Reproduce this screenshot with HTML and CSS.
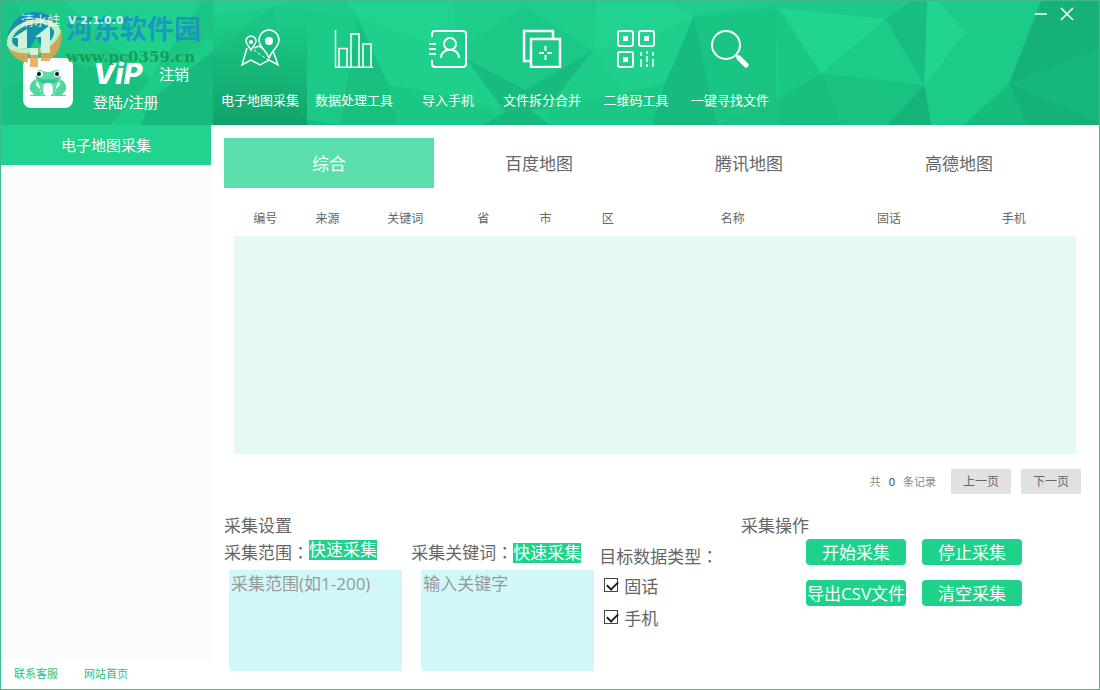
FILE: index.html
```html
<!DOCTYPE html>
<html lang="zh-CN">
<head>
<meta charset="utf-8">
<title>清水蛙 V 2.1.0.0</title>
<link rel="stylesheet" href="styles.css">
</head>
<body>
<div class="window">
  <header class="header">
    <svg class="header-art" viewBox="0 0 1100 125" preserveAspectRatio="none" aria-hidden="true">
      <rect width="1100" height="125" fill="#1ccb87"/>
      <path d="M0 0H62L150 78L90 125H0Z" fill="#1cc986"/>
      <path d="M0 0H15L55 125H0Z" fill="#1cc384"/>
      <path d="M62 0H202L150 78Z" fill="#1fd18d"/>
      <path d="M0 90L60 60L150 78L110 125H0Z" fill="#19c07f"/>
      <path d="M213 50L150 100L140 125H213Z" fill="#17b97c"/>
      <path d="M202 0L150 78L213 32V0Z" fill="#1bc584"/>
      <path d="M213 0H300L272 6L213 16Z" fill="#1fd18d"/>
      <path d="M272 6L213 50V125H345L290 90Z" fill="#1bc684"/>
      <path d="M272 6L357 17L345 125H300Z" fill="#1bca87"/>
      <path d="M300 118L336 125H300Z" fill="#18bd7e"/>
      <path d="M347 0H455V48L430 44L357 17Z" fill="#20d38f"/>
      <path d="M357 17L388 84L398 125H340Z" fill="#19c07f"/>
      <path d="M357 17L430 44L470 60L502 108L388 84Z" fill="#1ed08b"/>
      <path d="M388 84L440 94L502 115L478 125H398Z" fill="#1bc785"/>
      <path d="M455 0H596V50H455Z" fill="#1dcd89"/>
      <path d="M524 5L592 50L525 90L462 48Z" fill="#1bc886"/>
      <path d="M466 58L525 90L592 51L548 108L505 112Z" fill="#18bb7e"/>
      <path d="M505 112L525 106L550 125H483Z" fill="#17b87c"/>
      <path d="M548 108L592 51L660 84L625 94Z" fill="#1dcc89"/>
      <path d="M596 0H672L694 16L650 38L594 50Z" fill="#20d38f"/>
      <path d="M594 50L650 38L694 16L665 84L625 94Z" fill="#1ed08b"/>
      <path d="M548 108L665 84L652 125H550Z" fill="#1bc785"/>
      <path d="M672 0H780L694 16Z" fill="#1dcd89"/>
      <path d="M694 16L665 84L652 125H718Z" fill="#18bb7e"/>
      <path d="M694 16L776 6V120H718Z" fill="#1ac583"/>
      <path d="M776 6L822 73L780 98Z" fill="#1bc785"/>
      <path d="M694 16L780 0H912L886 18L780 7Z" fill="#1cc987"/>
      <path d="M780 7L886 18L822 73Z" fill="#20d590"/>
      <path d="M822 73L925 85L888 125H716L780 98Z" fill="#19c280"/>
      <path d="M822 73L780 98V125H842Z" fill="#18be7e"/>
      <path d="M886 18L912 0H928L925 85Z" fill="#18be80"/>
      <path d="M928 0H940L966 32L925 85Z" fill="#20d590"/>
      <path d="M925 85L888 125H932Z" fill="#16b277"/>
      <path d="M1010 83L965 125H1027Z" fill="#17bc7c"/>
      <path d="M1042 0H1100V125H1027L1010 83Z" fill="#15b176"/>
      <path d="M1010 83L1100 48V122Z" fill="#16b77a"/>
    </svg>

    <div class="brand">
      <h1 class="app-title"><span class="app-name">清水蛙</span><span>V 2.1.0.0</span></h1>
      <div class="account">
        <svg class="app-icon" viewBox="0 0 50 50" aria-hidden="true">
          <rect width="50" height="50" rx="8" fill="#fff"/>
          <path d="M14 21C9 22 6 27 7 32L11 37H7V38H19L17 31L13 27ZM36 21C41 22 44 27 43 32L39 37H43V38H31L33 31L37 27Z" fill="#4fd8a0"/>
          <path d="M14 16Q14 11 18 12Q21 14 25 14Q29 14 32 12Q37 11 37 16Q39 22 34 26L31 38H19L16 26Q11 22 14 16Z" fill="#5ddba6"/>
          <path d="M14 20Q25 23 36 20Q34 26 25 26Q16 26 14 20Z" fill="#38c88f"/>
          <path d="M21 26Q25 24 29 26Q32 38 25 38Q18 38 21 26Z" fill="#fff"/>
          <circle cx="17" cy="16" r="3" fill="#fff"/><circle cx="34" cy="16" r="3" fill="#fff"/>
          <circle cx="16" cy="16" r="2" fill="#111"/><circle cx="34" cy="16" r="2" fill="#111"/>
        </svg>
        <div class="account-info">
          <div class="account-row"><span class="vip">ViP</span><a class="account-link" href="#">注销</a></div>
          <a class="account-link" href="#">登陆/注册</a>
        </div>
      </div>
      <div class="watermark">
        <svg class="watermark-logo" viewBox="0 0 56 56" aria-hidden="true">
          <path d="M2 24C6 8 18 1 29 1C41 1 51 8 53 18C43 9 18 9 2 24Z" fill="#1b7fc0"/>
          <path d="M6 30C9 17 24 11 36 11Q44 11 48 16V32H32V24L24 37H12Q6 35 6 30Z" fill="#0d8db0"/>
          <path d="M1 34C8 44 34 46 55 20C58 36 48 46 45 48H38V42L22 44V52C12 50 4 44 1 34Z" fill="#eda24e"/>
          <path d="M1 34C0 19 15 9 33 8C46 8 53 13 55 20C52 30 44 37 34 40L34 36C43 33 49 26 48 20C45 13 35 11 26 13C14 15 6 23 6 30C7 36 15 38 24 37V42C12 43 3 40 1 34Z" fill="#dff3d3"/>
          <path d="M21 18V37H12V27H7ZM44 14V50H35V26H29ZM24 37H32V56H24Z" fill="#f0faee"/>
          <path d="M24 44H32V56H24ZM35 42H44V50H35Z" fill="#eda24e"/>
        </svg>
        <div class="watermark-text">
          <span class="watermark-name">河东软件园</span>
          <span class="watermark-url">www.pc0359.cn</span>
        </div>
      </div>
    </div>

    <nav class="toolbar">
      <button class="tool tool-active" type="button">
        <svg class="tool-icon" viewBox="0 0 40 40">
          <path d="M7 20L2 37L11 32L20 37L29 32L38 37L33 23M14 20L19 18L23 21"/>
          <path d="M11 22C9 18 6 16 6 13A5 5 0 0 1 16 13C16 16 13 18 11 22ZM29 30C26 22 19 19 19 12A10 10 0 0 1 39 12C39 19 32 22 29 30Z"/>
          <circle class="solid" cx="29" cy="13" r="4"/><circle class="solid" cx="11" cy="14" r="2"/>
          <path d="M14 22L28 32" stroke-dasharray="3 2" stroke-width="1"/>
        </svg>
        <span>电子地图采集</span>
      </button>
      <button class="tool" type="button">
        <svg class="tool-icon" viewBox="0 0 40 40"><path d="M1.500 2V39.200H39M5 39V20.500H13V39M17 39V6H25V39M29 39V16H37V39"/></svg>
        <span>数据处理工具</span>
      </button>
      <button class="tool" type="button">
        <svg class="tool-icon" viewBox="0 0 40 40"><path stroke-width="2" d="M4 9V6Q4 3 7 3H35Q38 3 38 6V36Q38 39 35 39H7Q4 39 4 36V32"/><path stroke-width="2" d="M1 16H8M1 21H8M1 26H8M13 30C13 19 31 19 31 30"/><circle cx="22" cy="16" r="6" stroke-width="2"/></svg>
        <span>导入手机</span>
      </button>
      <button class="tool" type="button">
        <svg class="tool-icon" viewBox="0 0 40 40"><path stroke-width="2.500" d="M9 33H2V3H31V10"/><path stroke-width="2.500" d="M9 11H38V39H9Z"/><path stroke-width="2" d="M17 25H22M25 25H30M23.500 18V23M23.500 27V32"/></svg>
        <span>文件拆分合并</span>
      </button>
      <button class="tool" type="button">
        <svg class="tool-icon" viewBox="0 0 40 40"><g stroke-width="2"><rect x="2" y="3" width="15" height="15" rx="2"/><rect x="23" y="3" width="15" height="15" rx="2"/><rect x="2" y="24" width="15" height="15" rx="2"/></g><path stroke-width="1.500" d="M25 24V28M25 31V39M31 23V26M31 28V34M31 36V39M37 24V28M37 31V39"/><path class="solid" d="M7 8H12V13H7ZM28 8H33V13H28ZM7 29H12V34H7Z"/></svg>
        <span>二维码工具</span>
      </button>
      <button class="tool" type="button">
        <svg class="tool-icon" viewBox="0 0 40 40"><circle cx="16" cy="17" r="14" stroke-width="2"/><path d="M26 27L29 30" stroke-width="2"/><path d="M29 30L36 37" stroke-width="5" stroke-linecap="round"/></svg>
        <span>一键寻找文件</span>
      </button>
    </nav>

    <div class="window-controls">
      <button class="window-button" type="button" aria-label="最小化"><svg viewBox="0 0 14 14"><path d="M1 7H13"/></svg></button>
      <button class="window-button" type="button" aria-label="关闭"><svg viewBox="0 0 14 14"><path d="M1 1L13 13M13 1L1 13"/></svg></button>
    </div>
  </header>

  <div class="body">
    <aside class="sidebar">
      <h2 class="sidebar-title">电子地图采集</h2>
      <div class="sidebar-list"></div>
      <footer class="sidebar-footer"><a href="#">联系客服</a><a href="#">网站首页</a></footer>
    </aside>

    <main class="main">
      <div class="tabs">
        <button class="tab tab-active" type="button">综合</button>
        <button class="tab" type="button">百度地图</button>
        <button class="tab" type="button">腾讯地图</button>
        <button class="tab" type="button">高德地图</button>
      </div>

      <table class="records">
        <colgroup>
          <col class="col-s"><col class="col-s"><col class="col-m"><col class="col-s"><col class="col-s"><col class="col-s"><col class="col-xl"><col class="col-l"><col class="col-l">
        </colgroup>
        <thead>
          <tr><th>编号</th><th>来源</th><th>关键词</th><th>省</th><th>市</th><th>区</th><th>名称</th><th>固话</th><th>手机</th></tr>
        </thead>
        <tbody><tr><td colspan="9"></td></tr></tbody>
      </table>

      <div class="pager">
        <p class="total"><span>共</span><span class="total-count">0</span><span>条记录</span></p>
        <button class="page-button" type="button">上一页</button>
        <button class="page-button" type="button">下一页</button>
      </div>

      <div class="panels">
        <section class="settings">
          <h2 class="panel-title">采集设置</h2>
          <div class="fields">
            <div class="field">
              <div class="field-head"><label for="range">采集范围<span class="colon" lang="zh-TW">：</span></label><button class="quick" type="button">快速采集</button></div>
              <textarea class="field-input" id="range" placeholder="采集范围(如1-200)"></textarea>
            </div>
            <div class="field">
              <div class="field-head"><label for="keyword">采集关键词<span class="colon" lang="zh-TW">：</span></label><button class="quick quick-low" type="button">快速采集</button></div>
              <textarea class="field-input" id="keyword" placeholder="输入关键字"></textarea>
            </div>
            <fieldset class="types">
              <legend>目标数据类型<span class="colon" lang="zh-TW">：</span></legend>
              <label class="check"><input type="checkbox" checked><span>固话</span></label>
              <label class="check"><input type="checkbox" checked><span>手机</span></label>
            </fieldset>
          </div>
        </section>
        <section class="actions">
          <h2 class="panel-title">采集操作</h2>
          <div class="action-grid">
            <button class="action" type="button">开始采集</button>
            <button class="action" type="button">停止采集</button>
            <button class="action" type="button">导出CSV文件</button>
            <button class="action" type="button">清空采集</button>
          </div>
        </section>
      </div>
    </main>
  </div>
</div>
</body>
</html>
```
FILE: styles.css
```css
* { box-sizing: border-box; }

body {
  margin: 0;
  background: #fff;
  color: #666;
  font-family: "Open Sans", "Noto Sans CJK SC", sans-serif;
  font-size: 17px;
  line-height: 24px;
}

button, textarea, input { font: inherit; color: inherit; }
button { padding: 0; border: 0; background: none; cursor: pointer; white-space: nowrap; }
h1, h2, p { margin: 0; font-size: inherit; font-weight: inherit; }
a { color: inherit; text-decoration: none; }

.window {
  display: flex;
  flex-direction: column;
  min-height: 100vh;
  border: 1px solid #3fb88b;
}

/* Header */
.header {
  position: relative;
  display: flex;
  height: 124px;
  color: #fff;
}
.header-art {
  position: absolute;
  inset: 0;
  z-index: -1;
  width: 100%;
  height: 100%;
}
.brand {
  position: relative;
  flex: none;
  width: 212px;
  padding: 8px 0 0 20px;
}
.app-title {
  position: relative;
  z-index: 1;
  display: flex;
  gap: 8px;
  font-family: "DejaVu Sans", "Noto Sans CJK SC", sans-serif;
  font-size: 11px;
  font-weight: 700;
  opacity: 0.8;
}
.app-name { font-size: 13px; font-weight: 400; }
.account { display: flex; gap: 20px; padding: 25px 0 0 2px; }
.app-icon { width: 50px; height: 50px; }
.account-info { font-size: 15px; }
.account-row { display: flex; align-items: center; gap: 14px; height: 32px; }
.account-link { display: block; }
.vip {
  width: 52px;
  font-family: Inter, sans-serif;
  font-size: 29px;
  font-style: italic;
  font-weight: 800;
}
.watermark {
  position: absolute;
  top: 10px;
  left: 5px;
  display: flex;
  gap: 4px;
  pointer-events: none;
}
.watermark-logo { width: 56px; height: 56px; opacity: 0.85; }
.watermark-text { display: flex; flex-direction: column; }
.watermark-name {
  color: rgba(28, 134, 210, 0.75);
  font-size: 27px;
  font-weight: 700;
  line-height: 36px;
}
.watermark-url {
  color: rgba(24, 140, 66, 0.75);
  font-family: "DejaVu Serif", serif;
  font-size: 15px;
  font-weight: 700;
  line-height: 20px;
}

.toolbar { display: flex; }
.tool {
  display: flex;
  flex-direction: column;
  align-items: center;
  gap: 20px;
  width: 94px;
  padding-top: 27px;
  font-size: 13px;
}
.tool-active { background: linear-gradient(to bottom, rgba(10, 140, 88, 0) 16%, rgba(10, 140, 88, 0.6)); }
.tool-icon {
  width: 40px;
  height: 40px;
  fill: none;
  stroke: #fff;
  stroke-width: 1.5;
}
.tool-icon .solid { fill: #fff; stroke: none; }

.window-controls {
  display: flex;
  align-items: flex-start;
  gap: 12px;
  margin-left: auto;
  padding: 6px 25px 0 0;
}
.window-button { width: 14px; height: 14px; line-height: 0; }
.window-button svg { width: 14px; height: 14px; fill: none; stroke: #fff; stroke-width: 1.5; }

/* Sidebar */
.body { display: flex; flex: 1; }
.sidebar {
  display: flex;
  flex: none;
  flex-direction: column;
  width: 210px;
}
.sidebar-title {
  background: #20d38e;
  color: #fff;
  font-size: 15px;
  line-height: 40px;
  text-align: center;
}
.sidebar-list { flex: 1; background: #fbfbfb; }
.sidebar-footer {
  display: flex;
  gap: 26px;
  padding: 3px 13px;
  color: #1bc17f;
  font-size: 11px;
}

/* Main */
.main { flex: 1; min-width: 0; padding: 13px 18px 18px 13px; }
.tabs { display: grid; grid-template-columns: repeat(4, 1fr); margin-right: 17px; }
.tab { height: 50px; padding-top: 2px; }
.tab-active { background: #5adfac; color: #fff; }

.records {
  width: calc(100% - 15px);
  margin: 12px 0 0 10px;
  border-collapse: collapse;
  table-layout: fixed;
  font-size: 12px;
}
.records th { height: 36px; padding: 2px 0 0; font-weight: inherit; text-align: center; }
.records td { height: 218px; padding: 0; background: #e6faf4; }
.col-s { width: 7.4%; }
.col-m { width: 11.1%; }
.col-l { width: 14.8%; }
.col-xl { width: 22.3%; }

.pager {
  display: flex;
  align-items: center;
  justify-content: flex-end;
  gap: 10px;
  margin-top: 15px;
  font-size: 12px;
}
.total { display: flex; gap: 8px; margin-right: 5px; color: #888; font-size: 11px; }
.total-count { color: #333; }
.page-button { width: 60px; height: 25px; background: #e1e1e1; }

.panels { display: flex; gap: 24px; margin-top: 20px; }
.settings { flex: none; width: 493px; }
.fields { display: flex; gap: 5px; }
.field { width: 183px; }
.field:nth-child(2) { margin-left: 1px; }
.field-head { display: flex; height: 32px; padding-top: 2px; white-space: nowrap; }
.colon { font-family: "Noto Sans CJK TC", sans-serif; }
.quick {
  align-self: flex-start;
  height: 20px;
  background: #1ed28c;
  color: #fff;
  line-height: 20px;
}
.quick-low { margin-top: 3px; }
.field-input {
  display: block;
  width: 173px;
  height: 101px;
  margin-left: 5px;
  padding: 2px;
  border: 0;
  outline: 0;
  background: #d1f8f8;
  resize: none;
}
.field:nth-child(2) .field-input { margin-left: 10px; }
.field-input::placeholder { color: #999; opacity: 1; }

.types { min-width: 0; margin: 0; padding: 0; border: 0; white-space: nowrap; }
.types legend { padding: 6px 0 0; }
.check { display: flex; align-items: center; gap: 6px; height: 32px; padding-left: 5px; }
.check span { padding-top: 4px; }
.check input {
  width: 14px;
  height: 14px;
  margin: 0;
  border: 1px solid #444;
  appearance: none;
  background: #fff;
}
.check input:checked::before {
  content: "";
  display: block;
  width: 9px;
  height: 5px;
  margin: 2px 0 0 2px;
  border: solid #222;
  border-width: 0 0 2px 2px;
  transform: rotate(-45deg);
}

.action-grid {
  display: grid;
  grid-template-columns: 100px 100px;
  gap: 15px 16px;
  padding: 1px 0 0 65px;
}
.action {
  height: 26px;
  padding-top: 1px;
  border-radius: 4px;
  background: #1ed28c;
  color: #fff;
}
```
